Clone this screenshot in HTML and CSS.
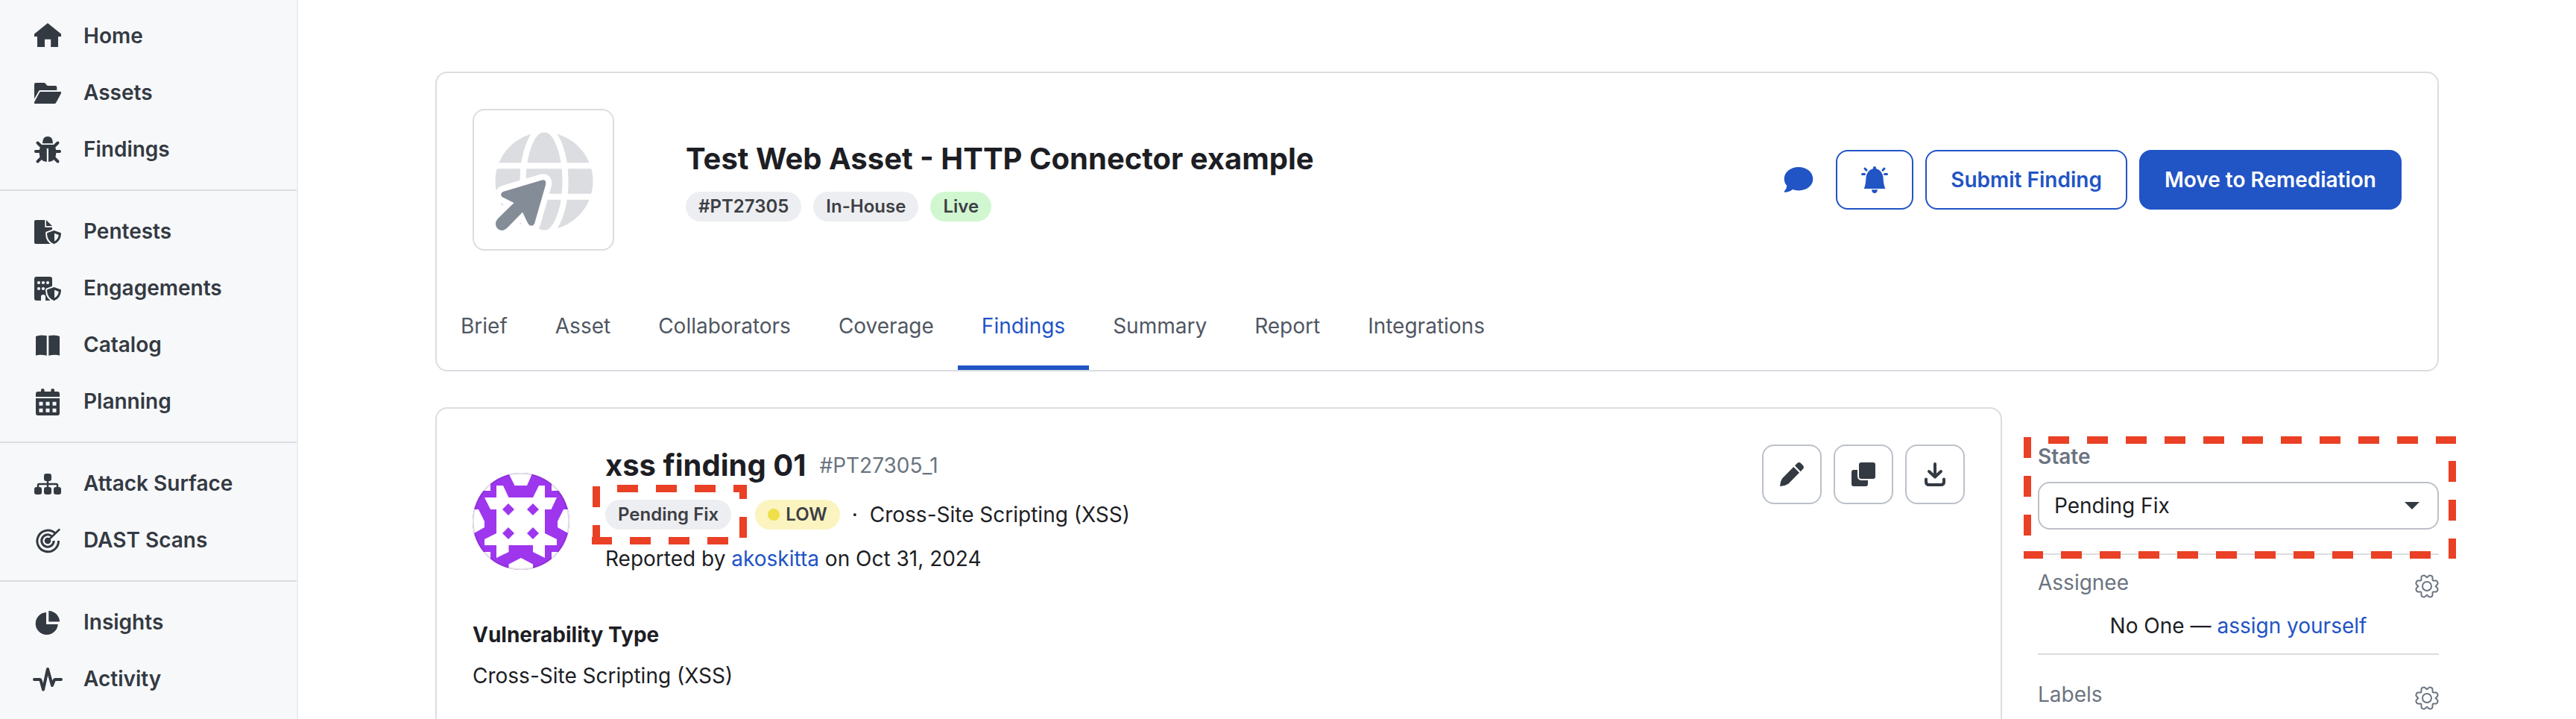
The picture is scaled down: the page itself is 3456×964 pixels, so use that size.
FILE: index.html
```html
<!DOCTYPE html>
<html lang="en">
<head>
<meta charset="utf-8">
<title>xss finding 01</title>
<link rel="stylesheet" href="styles.css">
</head>
<body>
<svg class="defs" aria-hidden="true">
  <symbol id="gear" viewBox="0 0 32 32">
    <g fill="none" stroke="currentColor" stroke-width="2" stroke-linecap="round" stroke-linejoin="round">
      <circle cx="16" cy="16" r="6"/>
      <g id="gear-quarter"><path d="M16 4.2 L18.6 1.9 Q19.5 1.1 20.9 1.6 L22 2 Q23.5 2.7 23.5 4 V7.3 Q23.5 8.5 24.7 8.5 H28 Q29.3 8.5 30 10 L30.4 11.1 Q30.9 12.5 30.1 13.4 L27.8 16"/></g>
      <use href="#gear-quarter" transform="rotate(90 16 16)"/>
      <use href="#gear-quarter" transform="rotate(180 16 16)"/>
      <use href="#gear-quarter" transform="rotate(270 16 16)"/>
    </g>
  </symbol>
  <symbol id="shield" viewBox="0 0 40 40">
    <path class="halo" d="M28.5 19 L37.5 22.5 Q38.5 33 28.5 37.2 Q18.5 33 19.2 22.5Z"/>
    <path fill="currentColor" d="M28.5 19 L37 22 Q38 22.4 38 23.5 Q37.5 33.5 28.5 37.2 Q19.5 33.5 19 23.5 Q19 22.4 20 22Z"/>
    <path class="knock" d="M29 22.8 L34.7 24.9 Q34.2 30.7 29 33.4Z"/>
  </symbol>
</svg>

<div class="app">
  <nav class="sidebar" aria-label="Main">
    <div class="nav-group">
      <a class="nav-item" href="#"><svg class="icon" viewBox="0 0 40 40"><path fill="currentColor" d="M20 3 L38 17.5 V21 H34 V35 H24.2 V24.7 H16 V35 H6 V21 H2 V17.5Z"/></svg>Home</a>
      <a class="nav-item" href="#"><svg class="icon" viewBox="0 0 40 40"><path fill="currentColor" d="M4 7H15Q16.3 7 17 8L18.5 10Q19.3 11 20.5 11H30.3Q32.3 11 32.3 13V17H10Q8.6 17 8 18.2L2 28.5V9Q2 7 4 7Z"/><path fill="currentColor" d="M10.5 19H38V21L31 34Q30.4 35 29 35H2V33L9 20Q9.5 19 10.5 19Z"/></svg>Assets</a>
      <a class="nav-item" href="#"><svg class="icon" viewBox="0 0 40 40"><g fill="none" stroke="currentColor" stroke-width="4" stroke-linecap="round"><path d="M6.5 11.5L12 17M33.5 11.5L28 17M4 23H36M6.5 36.5L13 30M33.5 36.5L27 30"/></g><path fill="currentColor" d="M13 12.3Q13 3 20 3Q27 3 27 12.3Z"/><path fill="currentColor" d="M12 14H28Q31.3 18 31.3 24Q31.3 37 20 37Q8.7 37 8.7 24Q8.7 18 12 14Z"/><path class="knock" d="M18.8 19H21V37.5H18.8Z"/></svg>Findings</a>
    </div>
    <div class="nav-group">
      <a class="nav-item" href="#"><svg class="icon" viewBox="0 0 40 40"><path fill="currentColor" d="M4 5H16.3V14.7H26V37H4Q2 37 2 35V7Q2 5 4 5ZM18 5L26 13H18Z"/><use href="#shield"/></svg>Pentests</a>
      <a class="nav-item" href="#"><svg class="icon" viewBox="0 0 40 40"><path fill="currentColor" d="M5 5H23Q26 5 26 8V37H17V32Q17 29 14 29Q11 29 11 32V37H5Q2 37 2 34V8Q2 5 5 5Z"/><g class="knock"><circle cx="8" cy="13" r="2.1"/><circle cx="14" cy="13" r="2.1"/><circle cx="20" cy="13" r="2.1"/><circle cx="8" cy="21" r="2.1"/><circle cx="14" cy="21" r="2.1"/></g><use href="#shield"/></svg>Engagements</a>
      <a class="nav-item" href="#"><svg class="icon" viewBox="0 0 40 40"><path fill="currentColor" d="M4 9Q8 6.500 18.700 8V34.700Q9 32.800 4 34.700ZM36 9Q32 6.500 21.300 8V34.700Q31 32.800 36 34.700Z"/></svg>Catalog</a>
      <a class="nav-item" href="#"><svg class="icon" viewBox="0 0 40 40"><path fill="currentColor" d="M7 7H11V5Q11 3 13.300 3Q15.600 3 15.600 5V7H24.400V5Q24.400 3 26.700 3Q29 3 29 5V7H33Q36 7 36 10V14H4V10Q4 7 7 7ZM4 16H36V36Q36 39 33 39H7Q4 39 4 36Z"/><path class="knock" d="M8.500 20.700h5v5h-5zM17.500 20.700h5v5h-5zM26.500 20.700h5v5h-5zM8.500 29.800h5v5h-5zM17.500 29.800h5v5h-5zM26.500 29.800h5v5h-5z"/></svg>Planning</a>
    </div>
    <div class="nav-group">
      <a class="nav-item" href="#"><svg class="icon" viewBox="0 0 40 40"><path fill="none" stroke="currentColor" stroke-width="2.500" d="M20 16V26M7 26V22.500Q7 21 8.500 21H31.500Q33 21 33 22.500V26"/><g fill="currentColor"><rect x="15" y="7" width="10" height="10" rx="3"/><rect x="2" y="25" width="10" height="10" rx="3"/><rect x="15" y="25" width="10" height="10" rx="3"/><rect x="28" y="25" width="10" height="10" rx="3"/></g></svg>Attack Surface</a>
      <a class="nav-item" href="#"><svg class="icon" viewBox="0 0 40 40"><g fill="none" stroke="currentColor" stroke-width="3"><path d="M30.300 11.300A14.300 14.300 0 1 0 34.500 21"/><path d="M25.500 15A8.200 8.200 0 1 0 28.200 21"/><path d="M20 21L35.500 6" stroke-linecap="round" stroke-width="2.500"/></g><circle cx="20" cy="21" r="4.300" fill="currentColor"/></svg>DAST Scans</a>
    </div>
    <div class="nav-group">
      <a class="nav-item" href="#"><svg class="icon" viewBox="0 0 40 40"><path fill="currentColor" d="M18 7V23H33.700A15 15 0 1 1 18 7ZM21.300 5A15 15 0 0 1 36 19.500H21.300Z"/></svg>Insights</a>
      <a class="nav-item" href="#"><svg class="icon" viewBox="0 0 40 40"><path fill="none" stroke="currentColor" stroke-width="4" stroke-linecap="round" stroke-linejoin="round" d="M2 21H9Q10.300 21 10.700 22.500L14 34.500L20 7L26 29L28.500 22.500Q29 21 30.500 21H38"/></svg>Activity</a>
    </div>
  </nav>

  <main class="content">
    <section class="card">
      <div class="asset-head">
        <div class="asset-logo">
          <svg viewBox="0 0 186 186" aria-hidden="true">
            <circle cx="94" cy="95" r="65.500" fill="#dcdde1"/>
            <g fill="none" stroke="#fff" stroke-width="8"><ellipse cx="94" cy="95" rx="28.500" ry="70"/><path d="M20 74.200H170M20 115.700H170"/></g>
            <path id="cursor" fill="#848c98" stroke="#fff" stroke-width="16" paint-order="stroke" stroke-linejoin="round" d="M91 93.500Q97.500 92 96 100L81 152Q79 156 74.500 154Q73 153 72 151L65 136.500L45 157Q37 164.500 31 158Q26 151 33 144L53.500 124L37.500 116Q34 111.500 39 109Z"/>
          </svg>
        </div>
        <div class="asset-title">
          <h1>Test Web Asset - HTTP Connector example</h1>
          <div class="pills"><span class="pill">#PT27305</span><span class="pill">In-House</span><span class="pill pill-live">Live</span></div>
        </div>
        <div class="actions">
          <button class="chat" aria-label="Messages"><svg class="icon" viewBox="0 0 40 40"><path fill="currentColor" d="M20 3C31 3 39.300 9.800 39.300 19C39.300 28 31 34.400 20 34.400Q15.500 34.400 12 33Q7 37 1.500 36.800Q0 36.500 1 35.200Q4 32 4.300 28Q.7 24 .7 19C.7 9.800 9 3 20 3Z"/></svg></button>
          <button class="btn btn-icon" aria-label="Notifications"><svg class="icon" viewBox="0 0 40 40"><path fill="currentColor" d="M18 5V4Q18 2 20 2Q22 2 22 4V5Q30.500 7.500 31.500 17Q32 27 34.400 32H5.800Q8 27 8.500 17Q9.500 7.500 18 5ZM16 33.300H24Q23.500 38 20 38Q16.500 38 16 33.300Z"/><path fill="none" stroke="currentColor" stroke-width="3" stroke-linecap="round" d="M3.500 12.500H6.500M33.500 12.500H36.500M7 5L9 7.200M33 5L31 7.200"/></svg></button>
          <button class="btn">Submit Finding</button>
          <button class="btn btn-primary">Move to Remediation</button>
        </div>
      </div>
      <nav class="tabs" aria-label="Asset">
        <a class="tab" href="#">Brief</a><a class="tab" href="#">Asset</a><a class="tab" href="#">Collaborators</a><a class="tab" href="#">Coverage</a><a class="tab tab-on" href="#" aria-current="page">Findings</a><a class="tab" href="#">Summary</a><a class="tab" href="#">Report</a><a class="tab" href="#">Integrations</a>
      </nav>
    </section>

    <div class="columns">
      <section class="card finding">
        <div class="finding-head">
          <svg class="avatar" viewBox="0 0 130 130" aria-hidden="true">
            <clipPath id="round"><circle cx="65" cy="65" r="65"/></clipPath>
            <g clip-path="url(#round)">
              <rect width="130" height="130" fill="#9e36ee"/>
              <path fill="#fff" d="M32 17H41L48.500 33H81L89 17H97V33H113L105.500 49H97V81L113 89V97H97V114L81 106V97H48.500V106L32 114V97H16V89L32 81V49H24L16 33H32ZM48 0L56.500 17H73L80.500 0ZM48.500 130V122.500L65 114L81 122.500V130ZM0 49H8L16 65V73L0 82ZM130 49H122L114 65V73L130 82ZM0 0H24V24H0ZM106 0H130V24H106ZM0 106H24V130H0ZM106 106H130V130H106Z"/>
              <path fill="#9e36ee" d="M48 41l8 8l-8 8l-8-8zM81 41l8 8l-8 8l-8-8zM48 73l8 8l-8 8l-8-8zM81 73l8 8l-8 8l-8-8z"/>
            </g>
            <circle cx="65" cy="65" r="64" fill="none" stroke="#000" stroke-opacity=".1" stroke-width="2"/>
          </svg>
          <div class="finding-info">
            <div class="finding-title"><h2>xss finding 01</h2><span class="finding-id">#PT27305_1</span></div>
            <div class="finding-meta">
              <span class="marked"><span class="pill">Pending Fix</span>
                <svg class="mark mark-pill" viewBox="0 0 208 80" aria-hidden="true"><path d="M6 2V80"/><path d="M34 5H208"/><path d="M203 0V19M203 43V71" class="solid"/><path d="M183 75H0"/></svg>
              </span>
              <span class="severity"><span class="pill pill-low"><i class="dot"></i>LOW</span><span>·</span><span>Cross-Site Scripting (XSS)</span></span>
            </div>
            <p>Reported by <a href="#">akoskitta</a> on Oct 31, 2024</p>
          </div>
          <div class="tools">
            <button class="tool" aria-label="Edit"><svg class="icon" viewBox="0 0 40 40"><path fill="currentColor" d="M22.300 10L30 17.700L15.500 32.500Q11 35.500 4 36Q4.300 29.500 7 25.500ZM24 8.300L27 5.200Q29.700 2.800 32.500 5.500L34.700 7.700Q37.200 10.500 34.800 13L31.700 16.200Z"/></svg></button>
            <button class="tool" aria-label="Duplicate"><svg class="icon" viewBox="0 0 40 40"><path fill="currentColor" d="M7 14H12V22Q12 28 18 28H26V33Q26 36 23 36H7Q4 36 4 33V17Q4 14 7 14Z"/><rect x="14" y="4" width="22" height="22" rx="3" fill="currentColor"/></svg></button>
            <button class="tool" aria-label="Download"><svg class="icon" viewBox="0 0 40 40"><path fill="none" stroke="currentColor" stroke-width="4" stroke-linecap="round" stroke-linejoin="round" d="M20 6V23M12 16L20 23.500L28 16M8 26.500V30Q8 34 12 34H28Q32 34 32 30V26.500"/></svg></button>
          </div>
        </div>
        <h3>Vulnerability Type</h3>
        <p>Cross-Site Scripting (XSS)</p>
      </section>

      <aside class="side">
        <div class="side-block marked">
          <label class="side-label strong" for="state">State</label>
          <div class="select">
            <select id="state"><option>Pending Fix</option><option>Fixed</option></select>
            <svg class="caret" viewBox="0 0 20 10" aria-hidden="true"><path fill="currentColor" d="M0 0H20L10 10Z"/></svg>
          </div>
          <svg class="mark mark-state" viewBox="0 0 580 164" aria-hidden="true"><path d="M5 1V164"/><path d="M33 5H580"/><path d="M575 33V164"/><path d="M0 159H26"/><path d="M50 159H560"/><path d="M570 159H580"/></svg>
        </div>
        <div class="side-block assignee">
          <div class="side-head"><span class="side-label">Assignee</span><button class="gear" aria-label="Edit assignee"><svg viewBox="0 0 32 32"><use href="#gear"/></svg></button></div>
          <p>No One — <a href="#">assign yourself</a></p>
        </div>
        <div class="side-block labels">
          <div class="side-head"><span class="side-label">Labels</span><button class="gear" aria-label="Edit labels"><svg viewBox="0 0 32 32"><use href="#gear"/></svg></button></div>
        </div>
      </aside>
    </div>
  </main>
</div>
</body>
</html>
```
FILE: styles.css
```css
* { box-sizing: border-box; }

body {
  margin: 0;
  overflow: hidden;
  background: #fff;
  color: #1d1e24;
  font: 400 28px/42px Inter, "Liberation Sans", sans-serif;
}

h1, h2, h3, p { margin: 0; }
h1, h2 { font-size: 40px; line-height: 56px; font-weight: 700; }
h3 { font-size: 28px; line-height: 42px; font-weight: 700; }
a { color: #2154c5; text-decoration: none; }
button, select { font: inherit; color: inherit; margin: 0; cursor: pointer; }
.defs { position: absolute; width: 0; height: 0; }
.icon { display: block; flex: none; width: 40px; height: 40px; }

.app { display: flex; min-height: 100vh; }

/* Sidebar */
.sidebar {
  flex: none;
  width: 400px;
  padding-top: 10px;
  background: #f7f8fa;
  border-right: 2px solid #ecedf0;
}
.nav-group + .nav-group { margin-top: 16px; padding-top: 16px; border-top: 2px solid #dcdde1; }
.nav-item {
  display: flex;
  align-items: center;
  gap: 28px;
  height: 76px;
  padding-left: 44px;
  color: #343a42;
  font-weight: 600;
}
.knock { fill: #f7f8fa; }
.halo { fill: #f7f8fa; stroke: #f7f8fa; stroke-width: 4; }

/* Content */
.content { flex: 1; min-width: 0; padding: 96px 184px 0; }
.card { border: 2px solid #dcdde1; border-radius: 16px; }

.asset-head { display: flex; align-items: center; padding: 48px; }
.asset-logo {
  flex: none;
  width: 190px;
  height: 190px;
  border: 2px solid #dcdde1;
  border-radius: 16px;
}
.asset-logo svg { display: block; overflow: hidden; }
.asset-title { flex: 1; margin-left: 96px; }
.pills { display: flex; gap: 16px; margin-top: 16px; }
.pill {
  display: inline-flex;
  align-items: center;
  gap: 8px;
  height: 40px;
  padding: 0 17px;
  border-radius: 20px;
  background: #edeef1;
  color: #3d3f45;
  font-size: 24px;
  font-weight: 600;
}
.pill-live { background: #d1f7d0; }
.pill-low { background: #fbf4c0; }
.dot { width: 16px; height: 16px; border-radius: 50%; background: #efdf4a; }

.actions { display: flex; align-items: center; gap: 16px; }
.chat { padding: 0 14px; border: 0; background: none; color: #2154c5; }
.btn {
  display: flex;
  align-items: center;
  height: 80px;
  padding: 0 32px;
  border: 2px solid #2154c5;
  border-radius: 16px;
  background: #fff;
  color: #2154c5;
  font-weight: 600;
}
.btn-icon { padding: 0 30px; }
.btn-primary { background: #2154c5; color: #fff; }

.tabs { display: flex; }
.tab {
  display: flex;
  align-items: center;
  height: 112px;
  padding: 0 32px;
  border-bottom: 6px solid transparent;
  color: #505762;
}
.tab-on { color: #2154c5; border-color: #2154c5; }

.columns { display: grid; grid-template-columns: minmax(0, 1fr) 538px; gap: 48px; margin-top: 48px; }

/* Finding */
.finding { padding: 48px; border-bottom-left-radius: 0; border-bottom-right-radius: 0; min-height: 440px; }
.finding-head { display: flex; align-items: center; gap: 48px; margin-bottom: 28px; }
.avatar { flex: none; width: 130px; height: 130px; }
.finding-info { flex: 1; padding-bottom: 32px; }
.finding-title { display: flex; align-items: center; gap: 18px; }
.finding-id { color: #6b7480; }
.finding-meta { display: flex; align-items: center; gap: 32px; margin: 18px 0; }
.severity { display: flex; align-items: center; gap: 16px; height: 40px; }
.marked { position: relative; display: flex; }
.mark {
  position: absolute;
  overflow: hidden;
  fill: none;
  stroke: #ea4025;
  stroke-width: 10px;
  stroke-dasharray: 28 24;
  pointer-events: none;
}
.mark .solid { stroke-dasharray: none; }
.mark-pill { left: -18px; top: -20px; width: 208px; height: 80px; }
.tools { display: flex; align-self: flex-start; gap: 16px; }
.tool {
  width: 80px;
  height: 80px;
  padding: 0 18px;
  border: 2px solid #bcc0c8;
  border-radius: 16px;
  background: #fff;
  color: #343a42;
}
.finding h3 { margin-bottom: 13px; }

/* Side panel */
.side { padding-top: 45px; }
.side-block { border-bottom: 2px solid #dcdde1; }
.side-block.marked { display: block; padding-bottom: 32px; }
.mark-state { left: -19px; top: -6px; width: 580px; height: 164px; }
.side-label { display: block; color: #6b7480; }
.strong { font-weight: 600; }
.select { position: relative; margin-top: 13px; }
.select select {
  display: block;
  width: 100%;
  height: 64px;
  padding: 0 60px 0 20px;
  border: 2px solid #bcc0c8;
  border-radius: 16px;
  background: #fff;
  appearance: none;
}
.caret { position: absolute; right: 26px; top: 27px; width: 20px; height: 10px; color: #343a42; pointer-events: none; }
.side-head { display: flex; justify-content: space-between; align-items: flex-end; }
.gear { padding: 0; border: 0; background: none; color: #6b7480; }
.gear svg { display: block; width: 32px; height: 32px; }
.assignee { padding: 16px 0; }
.assignee p { margin-top: 16px; text-align: center; }
.labels { padding-top: 32px; border-bottom: 0; }
```
